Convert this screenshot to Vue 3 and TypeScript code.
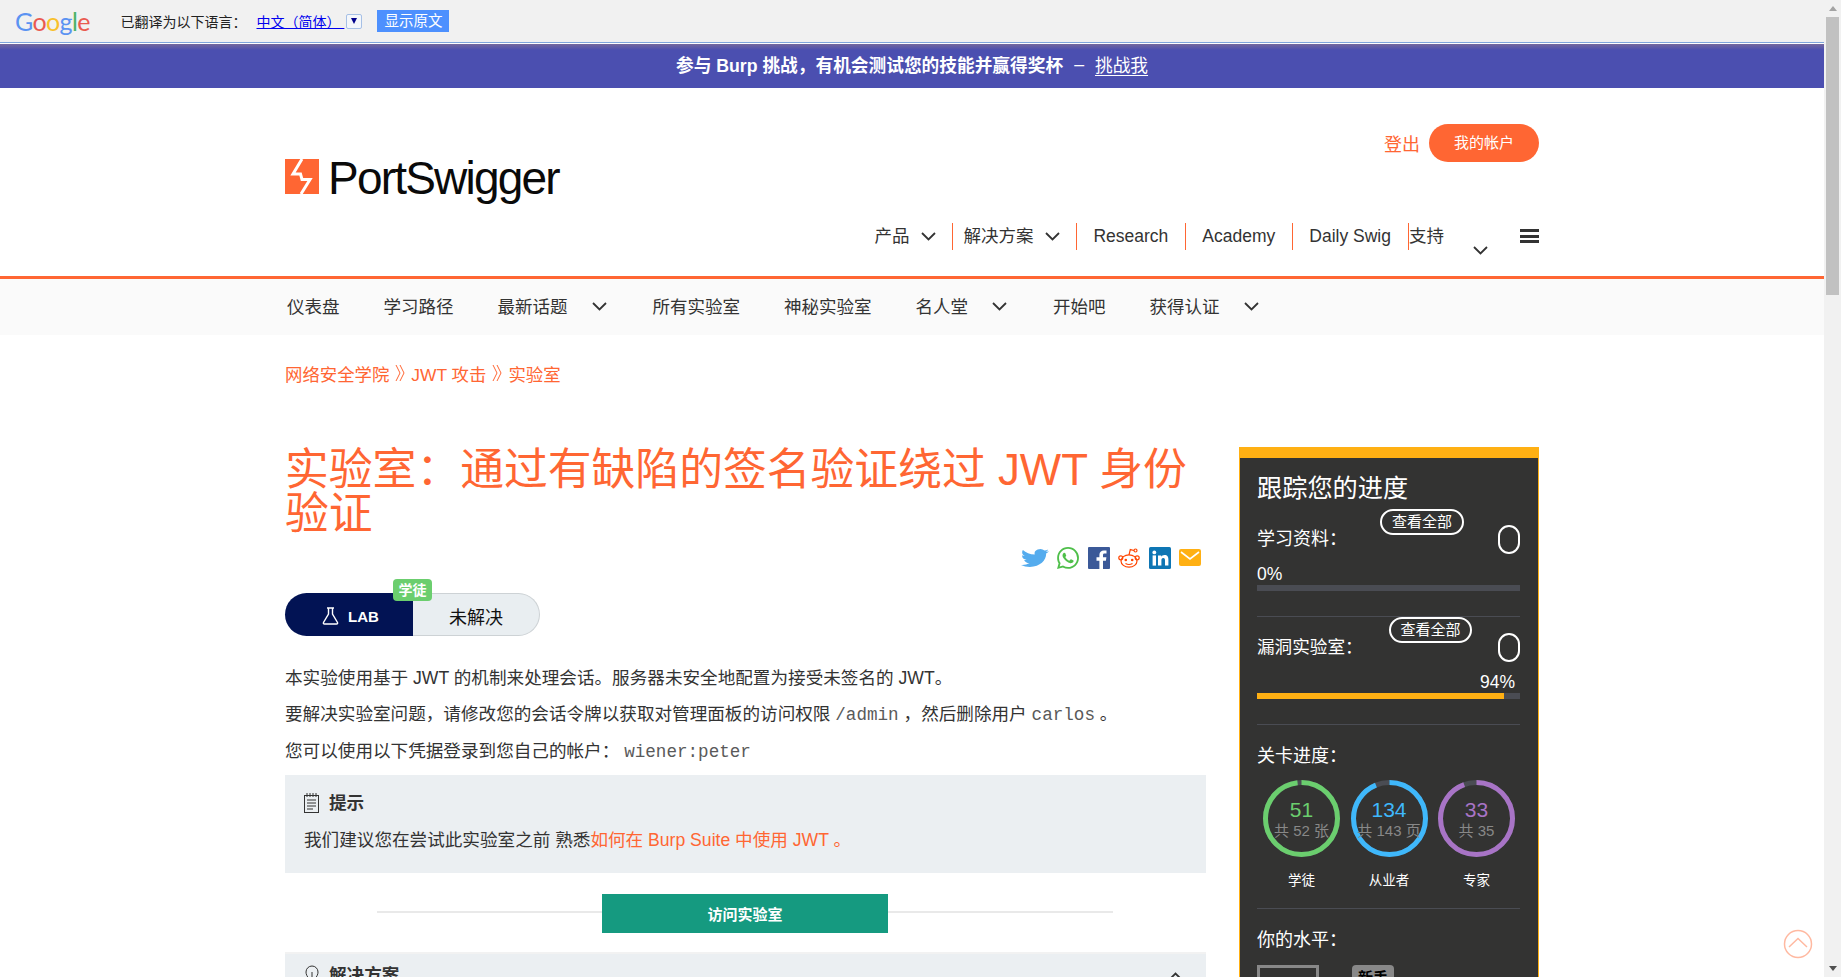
<script setup lang="ts">
interface NavItem {
  label: string;
  chevron?: boolean;
}

const mainNav: NavItem[] = [
  { label: '产品', chevron: true },
  { label: '解决方案', chevron: true },
  { label: 'Research' },
  { label: 'Academy' },
  { label: 'Daily Swig' },
];

const subNav: NavItem[] = [
  { label: '仪表盘' },
  { label: '学习路径' },
  { label: '最新话题', chevron: true },
  { label: '所有实验室' },
  { label: '神秘实验室' },
  { label: '名人堂', chevron: true },
  { label: '开始吧' },
  { label: '获得认证', chevron: true },
];

const radius = 36;
const circumference = 2 * Math.PI * radius;

const levels = [
  { done: 51, total: 52, note: '共 52 张', name: '学徒', color: '#6bce6e' },
  { done: 134, total: 143, note: '共 143 页', name: '从业者', color: '#3fb8fb' },
  { done: 33, total: 35, note: '共 35', name: '专家', color: '#a874c6' },
];
</script>

<template>
  <div class="page">
    <div class="main">
      <div class="translate-bar">
        <div class="google">
          <span class="g-blue">G</span><span class="g-red">o</span><span class="g-yellow">o</span><span class="g-blue">g</span><span class="g-green">l</span><span class="g-red">e</span>
        </div>
        <span class="translate-label">已翻译为以下语言&#xFF1A;</span>
        <a class="translate-lang">中文&#xFF08;简体&#xFF09;&nbsp;</a>
        <span class="translate-drop"><i></i></span>
        <span class="translate-btn">显示原文</span>
      </div>

      <div class="banner">
        <strong>参与 Burp 挑战&#xFF0C;有机会测试您的技能并赢得奖杯</strong>
        <span class="banner-dash">–</span>
        <a>挑战我</a>
      </div>

      <div class="wrap masthead">
        <div class="logo">
          <svg width="34" height="35" viewBox="0 0 34 35">
            <rect width="34" height="35" fill="#ff6633" />
            <path d="M17 0 L8 15 L15.500 15 L17 20.500 L25 20.500 L16 35" fill="none" stroke="#fff" stroke-width="3" />
          </svg>
          <span class="logo-text">PortSwigger</span>
        </div>
        <div class="masthead-right">
          <div class="account">
            <a class="logout">登出</a>
            <a class="account-btn">我的帐户</a>
          </div>
          <nav class="main-nav">
            <a v-for="item in mainNav" :key="item.label" class="main-nav-item">
              {{ item.label }}
              <svg v-if="item.chevron" class="chev" width="15" height="9" viewBox="0 0 15 9">
                <path d="M1 1 L7.5 7.5 L14 1" fill="none" stroke="#333" stroke-width="1.8" />
              </svg>
            </a>
            <a class="main-nav-item support">
              支持
              <svg class="chev support-chev" width="15" height="9" viewBox="0 0 15 9">
                <path d="M1 1 L7.5 7.5 L14 1" fill="none" stroke="#333" stroke-width="1.8" />
              </svg>
            </a>
            <span class="burger"><i></i><i></i><i></i></span>
          </nav>
        </div>
      </div>

      <div class="subnav">
        <div class="wrap subnav-row">
          <a v-for="item in subNav" :key="item.label" class="subnav-item">
            {{ item.label }}
            <svg v-if="item.chevron" class="chev" width="15" height="9" viewBox="0 0 15 9">
              <path d="M1 1 L7.5 7.5 L14 1" fill="none" stroke="#333" stroke-width="1.8" />
            </svg>
          </a>
        </div>
      </div>

      <div class="wrap breadcrumb">
        <a>网络安全学院</a>
        <svg width="10" height="18" viewBox="0 0 10 18"><path d="M1 1 L5 9 L1 17 M5 1 L9 9 L5 17" fill="none" stroke="#ff6633" stroke-width="1" /></svg>
        <a>JWT 攻击</a>
        <svg width="10" height="18" viewBox="0 0 10 18"><path d="M1 1 L5 9 L1 17 M5 1 L9 9 L5 17" fill="none" stroke="#ff6633" stroke-width="1" /></svg>
        <a>实验室</a>
      </div>

      <div class="wrap content">
        <div class="article">
          <h1>实验室&#xFF1A;通过有缺陷的签名验证绕过 JWT 身份验证</h1>

          <div class="share">
            <svg width="28" height="22" viewBox="0 0 24 24" preserveAspectRatio="none">
              <path fill="#55acee" d="M23.953 4.57a10 10 0 01-2.825.775 4.958 4.958 0 002.163-2.723c-.951.555-2.005.959-3.127 1.184a4.92 4.92 0 00-8.384 4.482C7.69 8.095 4.067 6.13 1.64 3.162a4.822 4.822 0 00-.666 2.475c0 1.71.87 3.213 2.188 4.096a4.904 4.904 0 01-2.228-.616v.06a4.923 4.923 0 003.946 4.827 4.996 4.996 0 01-2.212.085 4.936 4.936 0 004.604 3.417 9.867 9.867 0 01-6.102 2.105c-.39 0-.779-.023-1.17-.067a13.995 13.995 0 007.557 2.209c9.053 0 13.998-7.496 13.998-13.985 0-.21 0-.42-.015-.63A9.935 9.935 0 0024 4.59z" />
            </svg>
            <svg width="22" height="22" viewBox="0 0 24 24">
              <path fill="#4fbf4a" d="M17.472 14.382c-.297-.149-1.758-.867-2.03-.967-.273-.099-.471-.148-.67.15-.197.297-.767.966-.94 1.164-.173.199-.347.223-.644.075-.297-.15-1.255-.463-2.39-1.475-.883-.788-1.48-1.761-1.653-2.059-.173-.297-.018-.458.13-.606.134-.133.298-.347.446-.52.149-.174.198-.298.298-.497.099-.198.05-.371-.025-.52-.075-.149-.669-1.612-.916-2.207-.242-.579-.487-.5-.669-.51-.173-.008-.371-.01-.57-.01-.198 0-.52.074-.792.372-.272.297-1.04 1.016-1.04 2.479 0 1.462 1.065 2.875 1.213 3.074.149.198 2.096 3.2 5.077 4.487.709.306 1.262.489 1.694.625.712.227 1.36.195 1.871.118.571-.085 1.758-.719 2.006-1.413.248-.694.248-1.289.173-1.413-.074-.124-.272-.198-.57-.347m-5.421 7.403h-.004a9.87 9.87 0 01-5.031-1.378l-.361-.214-3.741.982.998-3.648-.235-.374a9.86 9.86 0 01-1.51-5.26c.001-5.45 4.436-9.884 9.888-9.884 2.64 0 5.122 1.03 6.988 2.898a9.825 9.825 0 012.893 6.994c-.003 5.45-4.437 9.884-9.885 9.884m8.413-18.297A11.815 11.815 0 0012.05 0C5.495 0 .16 5.335.157 11.892c0 2.096.547 4.142 1.588 5.945L.057 24l6.305-1.654a11.882 11.882 0 005.683 1.448h.005c6.554 0 11.89-5.335 11.893-11.893a11.821 11.821 0 00-3.48-8.413z" />
            </svg>
            <svg width="22" height="22" viewBox="0 0 22 22">
              <rect width="22" height="22" rx="1" fill="#3b5998" />
              <path fill="#fff" d="M15 22v-8.300h2.900l.5-3.400H15V8.200c0-1 .3-1.600 1.700-1.600h1.800V3.500c-.4 0-1.400-.1-2.600-.1-2.700 0-4.500 1.600-4.500 4.500v2.400H8.500v3.400h2.900V22z" />
            </svg>
            <svg width="22" height="22" viewBox="0 0 22 22" fill="none" stroke="#ff4500" stroke-width="1.2">
              <ellipse cx="11" cy="14" rx="8" ry="6.200" />
              <circle cx="2.800" cy="10.800" r="2" />
              <circle cx="19.200" cy="10.800" r="2" />
              <path d="M11 8 L12.300 2.600 L16 3.500" />
              <circle cx="17.500" cy="3.500" r="1.500" />
              <circle cx="7.800" cy="13" r="1.300" fill="#ff4500" stroke="none" />
              <circle cx="14.200" cy="13" r="1.300" fill="#ff4500" stroke="none" />
              <path d="M7.500 16.500 Q11 18.500 14.500 16.500" />
            </svg>
            <svg width="22" height="22" viewBox="0 0 22 22">
              <rect width="22" height="22" rx="1.500" fill="#0e76b4" />
              <circle cx="5.300" cy="5.400" r="1.900" fill="#fff" />
              <rect x="3.600" y="8.400" width="3.400" height="10.200" fill="#fff" />
              <path fill="#fff" d="M9 8.400h3.200v1.400c.5-.9 1.700-1.700 3.300-1.700 3 0 3.900 1.900 3.900 4.700v5.800H16v-5.200c0-1.300-.3-2.500-1.700-2.500-1.500 0-1.900 1.200-1.900 2.500v5.200H9z" />
            </svg>
            <svg width="22" height="17" viewBox="0 0 22 17" class="share-mail">
              <rect width="22" height="17" rx="2" fill="#ffb013" />
              <path d="M2 3 L11 10 L20 3" fill="none" stroke="#fff" stroke-width="1.600" />
            </svg>
          </div>

          <div class="lab-status">
            <span class="lab-tag">
              <svg width="17" height="18" viewBox="0 0 17 18" fill="none" stroke="#fff" stroke-width="1.400">
                <path d="M5 1 H12 M6.500 1 V7 L1.500 15.500 Q1 17 2.500 17 H14.500 Q16 17 15.500 15.500 L10.500 7 V1" />
              </svg>
              <b>LAB</b>
            </span>
            <span class="lab-state">未解决</span>
            <span class="lab-badge">学徒</span>
          </div>

          <p>本实验使用基于 JWT 的机制来处理会话。服务器未安全地配置为接受未签名的 JWT。</p>
          <p>要解决实验室问题&#xFF0C;请修改您的会话令牌以获取对管理面板的访问权限 <code>/admin</code> &#xFF0C;然后删除用户 <code>carlos</code> 。</p>
          <p>您可以使用以下凭据登录到您自己的帐户&#xFF1A; <code>wiener:peter</code></p>

          <div class="hint">
            <h4>
              <svg width="15" height="20" viewBox="0 0 15 20" fill="none" stroke="#333" stroke-width="1">
                <rect x="0.500" y="2.500" width="14" height="17" />
                <path d="M3 0 V4 M6 0 V4 M9 0 V4 M12 0 V4 M3 7 H12 M3 10 H12 M3 13 H12 M3 16 H9" />
              </svg>
              提示
            </h4>
            <div class="hint-text">我们建议您在尝试此实验室之前 熟悉<a>如何在 Burp Suite 中使用 JWT 。</a></div>
          </div>

          <div class="access">
            <span class="access-line"></span>
            <a class="access-btn">访问实验室</a>
            <span class="access-line"></span>
          </div>

          <div class="solution">
            <svg width="14" height="20" viewBox="0 0 14 20" fill="none" stroke="#333" stroke-width="1">
              <path d="M4 14 C2 11 1 9.500 1 7 A6 6 0 0 1 13 7 C13 9.500 12 11 10 14 Z M4.500 16.500 H9.500 M5.500 19 H8.500 M7 14 V7" />
            </svg>
            <b>解决方案</b>
            <svg class="solution-chev" width="15" height="9" viewBox="0 0 15 9">
              <path d="M1 8 L7.500 1.500 L14 8" fill="none" stroke="#333" stroke-width="1.800" />
            </svg>
          </div>
        </div>

        <aside class="progress">
          <h3>跟踪您的进度</h3>
          <div class="track">
            <span class="track-label">学习资料&#xFF1A;</span>
            <a class="pill">查看全部</a>
            <span class="oval"></span>
          </div>
          <div class="percent">0%</div>
          <div class="bar"></div>
          <hr class="rule-a" />
          <div class="track track-two">
            <span class="track-label">漏洞实验室&#xFF1A;</span>
            <a class="pill">查看全部</a>
            <span class="oval"></span>
          </div>
          <div class="percent percent-right">94%</div>
          <div class="bar"><div class="bar-fill" :style="{ width: '94%' }"></div></div>
          <hr class="rule-b" />
          <div class="section-label">关卡进度&#xFF1A;</div>
          <div class="levels">
            <div v-for="level in levels" :key="level.name" class="level">
              <div class="ring">
                <svg width="77" height="77" viewBox="0 0 77 77">
                  <circle cx="38.500" cy="38.500" :r="radius" fill="none" stroke="#4a4c53" stroke-width="5" />
                  <circle
                    cx="38.500"
                    cy="38.500"
                    :r="radius"
                    fill="none"
                    :stroke="level.color"
                    stroke-width="5"
                    :stroke-dasharray="`${(circumference * level.done) / level.total} ${circumference}`"
                    transform="rotate(-90 38.500 38.500)"
                  />
                </svg>
                <div class="ring-text">
                  <span class="ring-num" :style="{ color: level.color }">{{ level.done }}</span>
                  <span class="ring-note">{{ level.note }}</span>
                </div>
              </div>
              <span class="level-name">{{ level.name }}</span>
            </div>
          </div>
          <hr class="rule-c" />
          <div class="section-label label-level">你的水平&#xFF1A;</div>
          <div class="rank">
            <span class="rank-box"></span>
            <span class="rank-badge">新手</span>
          </div>
        </aside>
      </div>

      <a class="to-top">
        <svg width="30" height="30" viewBox="0 0 30 30" fill="none" stroke="#ffb9a1" stroke-width="1.500">
          <circle cx="15" cy="15" r="13.500" />
          <path d="M6 18 L15 9.500 L24 18" />
        </svg>
      </a>
    </div>

    <div class="scrollbar">
      <i class="arrow-up"></i>
      <div class="thumb"></div>
      <i class="arrow-down"></i>
    </div>
  </div>
</template>

<style scoped>
.page {
  display: flex;
  height: 977px;
  overflow: hidden;
  background: #fff;
  color: #333;
  font-family: "Liberation Sans", "Noto Sans CJK SC", sans-serif;
  font-size: 17.6px;
}

.main {
  position: relative;
  flex: 1;
  min-width: 0;
  overflow: hidden;
}

.wrap {
  width: 1254px;
  margin: 0 auto;
}

/* translate bar */
.translate-bar {
  display: flex;
  align-items: center;
  height: 42px;
  padding-left: 15px;
  background: #f1f1f1;
  border-bottom: 1px solid #7fa6dc;
  font-size: 14px;
  color: #222;
}

.google {
  width: 105.500px;
  font-family: Lato, sans-serif;
  font-size: 25px;
  line-height: 26px;
  letter-spacing: -0.600px;
}

.g-blue { color: #5b93f2; }
.g-red { color: #ea5a50; }
.g-yellow { color: #f8c02b; }
.g-green { color: #4cb368; }

.translate-lang {
  margin-left: 10px;
  color: #00e;
  text-decoration: underline;
}

.translate-drop {
  display: flex;
  align-items: center;
  justify-content: center;
  width: 16px;
  height: 15px;
  margin-left: 2px;
  border: 1px solid #a6c0e6;
  border-radius: 2px;
  box-sizing: border-box;
  background: #f4f7fb;
}

.translate-drop i {
  border-top: 6px solid #00008b;
  border-left: 3.500px solid transparent;
  border-right: 3.500px solid transparent;
}

.translate-btn {
  width: 72px;
  height: 22px;
  margin-left: 15px;
  background: #4d90fe;
  color: #fff;
  font-size: 14.500px;
  line-height: 22px;
  text-align: center;
}

/* banner */
.banner {
  display: flex;
  align-items: center;
  justify-content: center;
  height: 44px;
  margin-top: 1px;
  padding-bottom: 4px;
  box-sizing: border-box;
  background: linear-gradient(#75699e, #4b4fb0 6px);
  color: #fff;
  font-size: 17.700px;
}

.banner-dash {
  margin: 0 11px;
}

.banner a {
  text-decoration: underline;
  text-underline-offset: 3px;
}

/* masthead */
.masthead {
  display: flex;
  justify-content: space-between;
  height: 188px;
}

.logo {
  display: flex;
  align-items: flex-start;
  gap: 9px;
  margin-top: 71px;
}

.logo-text {
  margin-top: -7px;
  font-size: 46px;
  line-height: 52px;
  letter-spacing: -1.800px;
  color: #0a0a0a;
}

.masthead-right {
  display: flex;
  flex-direction: column;
  align-items: flex-end;
}

.account {
  display: flex;
  align-items: center;
  gap: 9px;
  margin-top: 36px;
}

.logout {
  color: #ff6633;
  font-size: 18px;
}

.account-btn {
  width: 110px;
  height: 38px;
  border-radius: 19px;
  background: #ff6633;
  color: #fff;
  font-size: 15px;
  line-height: 38px;
  text-align: center;
}

.main-nav {
  display: flex;
  align-items: flex-start;
  margin-top: 61px;
  font-size: 17.500px;
}

.main-nav-item {
  display: flex;
  align-items: center;
  gap: 12px;
  height: 27px;
  padding: 0 17px 0 16px;
  border-left: 1px solid #ff6633;
  line-height: 27px;
  white-space: nowrap;
}

.main-nav-item:first-child {
  border-left: 0;
  padding-right: 16px;
}

.main-nav-item:nth-child(2) {
  padding: 0 16px 0 10px;
}

.main-nav-item.support {
  position: relative;
  width: 112px;
  box-sizing: border-box;
  padding: 0;
}

.support-chev {
  position: absolute;
  top: 23px;
  left: 64px;
}

.chev {
  flex: none;
}

.burger {
  display: flex;
  flex-direction: column;
  gap: 2.500px;
  width: 19px;
  margin-top: 6px;
}

.burger i {
  height: 3px;
  background: #333;
}

/* sub nav */
.subnav {
  height: 56px;
  border-top: 3px solid #ff6633;
  background: #fafafa;
  font-size: 17.500px;
}

.subnav-row {
  display: flex;
  align-items: center;
  gap: 44px;
  height: 52px;
  padding-left: 2px;
  box-sizing: border-box;
}

.subnav-item {
  display: flex;
  align-items: center;
  gap: 24px;
  white-space: nowrap;
}

.subnav-item .chev {
  margin-top: 2px;
}

.subnav-item:has(.chev) {
  margin-right: 2px;
}

/* breadcrumb */
.breadcrumb {
  display: flex;
  align-items: center;
  gap: 6px;
  height: 24px;
  padding-top: 26px;
  color: #ff6633;
  font-size: 17.400px;
}

/* content */
.content {
  display: flex;
  justify-content: space-between;
  margin-top: 62px;
}

.article {
  width: 921px;
}

h1 {
  margin: 1px 0 0;
  color: #ff6633;
  font-size: 43.800px;
  font-weight: 400;
  line-height: 44px;
}

.share {
  display: flex;
  align-items: flex-start;
  justify-content: flex-end;
  gap: 8.500px;
  margin-top: 11px;
  padding-right: 5px;
}

.share-mail {
  margin-top: 2px;
}

.lab-status {
  position: relative;
  display: flex;
  width: 255px;
  height: 43px;
  margin-top: 24px;
  border-radius: 22px;
  overflow: visible;
}

.lab-tag {
  display: flex;
  align-items: center;
  justify-content: center;
  gap: 9px;
  width: 128px;
  padding: 3px 0 0 3px;
  box-sizing: border-box;
  background: #021354;
  border-radius: 22px 0 0 22px;
  color: #fff;
  font-size: 15px;
}

.lab-state {
  flex: 1;
  border: 1px solid #cdd2d5;
  border-left: 0;
  border-radius: 0 22px 22px 0;
  background: #e9eef1;
  color: #111;
  font-size: 18px;
  line-height: 49px;
  text-align: center;
}

.lab-badge {
  position: absolute;
  top: -14px;
  left: 108px;
  width: 39px;
  height: 22px;
  border-radius: 4px;
  background: #6bce6e;
  color: #fff;
  font-size: 14px;
  font-weight: 700;
  line-height: 22px;
  text-align: center;
}

p {
  margin: 0 0 10px;
  line-height: 26px;
}

.lab-status + p {
  margin-top: 29px;
}

code {
  color: #5a5a5a;
  font-family: "Liberation Mono", "Noto Sans CJK SC", monospace;
  font-size: 17.600px;
}

.hint {
  height: 98px;
  padding: 16px 19px 0;
  box-sizing: border-box;
  background: #ebeff2;
}

h4 {
  display: flex;
  align-items: center;
  gap: 10px;
  margin: 0;
  font-size: 17.600px;
  line-height: 24px;
}

.hint-text {
  margin-top: 13px;
  line-height: 24px;
}

.hint-text a {
  color: #ff6633;
}

.access {
  display: flex;
  align-items: center;
  height: 39px;
  margin: 21px 93px 0 92px;
}

.access-line {
  flex: 1;
  height: 2px;
  margin-top: -3px;
  background: #e9e9e9;
}

.access-btn {
  width: 286px;
  height: 39px;
  background: #159a80;
  color: #fff;
  font-size: 15px;
  font-weight: 700;
  line-height: 41px;
  text-align: center;
}

.solution {
  display: flex;
  align-items: flex-start;
  gap: 10px;
  height: 60px;
  margin-top: 19px;
  padding: 11px 23px 0 20px;
  border-top: 2px solid #f2f2f2;
  background: #ebeff2;
}

.solution b {
  line-height: 20px;
}

.solution-chev {
  margin: 7px 0 0 auto;
}

/* progress panel */
.progress {
  width: 300px;
  height: 700px;
  padding: 0 18px 0 17px;
  box-sizing: border-box;
  border: 1px solid #ffb013;
  border-top: 11px solid #ffb013;
  background: #333332;
  color: #fff;
}

h3 {
  margin: 15px 0 0;
  font-size: 25.200px;
  font-weight: 400;
  line-height: 30px;
}

.track {
  display: flex;
  align-items: flex-start;
  height: 49px;
  margin-top: 6px;
}

.track-label {
  margin: 18px auto 0 0;
  font-size: 18px;
  line-height: 24px;
}

.pill {
  width: 84px;
  height: 26px;
  margin-right: 34px;
  border: 2px solid #fff;
  border-radius: 13px;
  box-sizing: border-box;
  font-size: 15px;
  line-height: 22px;
  text-align: center;
}

.oval {
  width: 22px;
  height: 29px;
  margin-top: 16px;
  border: 2px solid #fff;
  border-radius: 11px;
  box-sizing: border-box;
}

.track-two {
  margin-top: 0;
  height: 51px;
}

.track-two .track-label {
  font-size: 17.600px;
}

.track-two .pill {
  width: 83px;
  margin-right: 26px;
}

.percent {
  height: 22px;
  margin-top: 5px;
  font-size: 17.500px;
  line-height: 22px;
}

.percent-right {
  padding-right: 5px;
  margin-top: 3px;
  text-align: right;
}

.bar {
  height: 6px;
  margin-top: 0;
  background: #4a4c53;
}

.bar-fill {
  height: 100%;
  background: #ffb013;
}

hr {
  height: 1px;
  margin: 0;
  border: 0;
  background: #4a4c53;
}

.rule-a {
  margin-top: 25px;
}

.rule-b {
  margin-top: 25px;
}

.rule-c {
  margin-top: 18px;
}

.section-label {
  margin-top: 19px;
  font-size: 18px;
  line-height: 24px;
}

.label-level {
  margin-top: 19px;
}

.levels {
  display: flex;
  justify-content: space-between;
  margin-top: 12px;
  padding: 0 5px 0 6px;
}

.level {
  display: flex;
  flex-direction: column;
  align-items: center;
  width: 77px;
}

.ring {
  position: relative;
  width: 77px;
  height: 77px;
}

.ring svg {
  display: block;
}

.ring-text {
  position: absolute;
  top: 18px;
  left: -6px;
  right: -6px;
  display: flex;
  flex-direction: column;
  align-items: center;
  white-space: nowrap;
}

.ring-num {
  font-size: 21px;
  line-height: 23px;
}

.ring-note {
  color: #888;
  font-size: 15px;
  line-height: 20px;
}

.level-name {
  margin-top: 15px;
  font-size: 13.500px;
  line-height: 18px;
}

.rank {
  display: flex;
  gap: 33px;
  margin-top: 13px;
}

.rank-box {
  width: 62px;
  height: 40px;
  border: 3px solid #888;
  box-sizing: border-box;
}

.rank-badge {
  width: 42px;
  height: 26px;
  border-radius: 4px;
  background: #888;
  color: #000;
  font-size: 15px;
  font-weight: 700;
  line-height: 26px;
  text-align: center;
}

/* back to top */
.to-top {
  position: absolute;
  top: 929px;
  left: 1783px;
  line-height: 0;
}

/* scrollbar */
.scrollbar {
  position: relative;
  flex: none;
  display: flex;
  flex-direction: column;
  align-items: center;
  width: 17px;
  height: 100%;
  background: #f1f1f1;
}

.arrow-up {
  margin-top: 6px;
  border-bottom: 5px solid #a3a3a3;
  border-left: 4px solid transparent;
  border-right: 4px solid transparent;
}

.thumb {
  width: 13px;
  height: 278px;
  margin-top: 6px;
  background: #c1c1c1;
}

.arrow-down {
  margin-top: auto;
  margin-bottom: 6px;
  border-top: 5px solid #505050;
  border-left: 4px solid transparent;
  border-right: 4px solid transparent;
}
</style>

<style>
html,
body {
  margin: 0;
  overflow: hidden;
}
</style>
